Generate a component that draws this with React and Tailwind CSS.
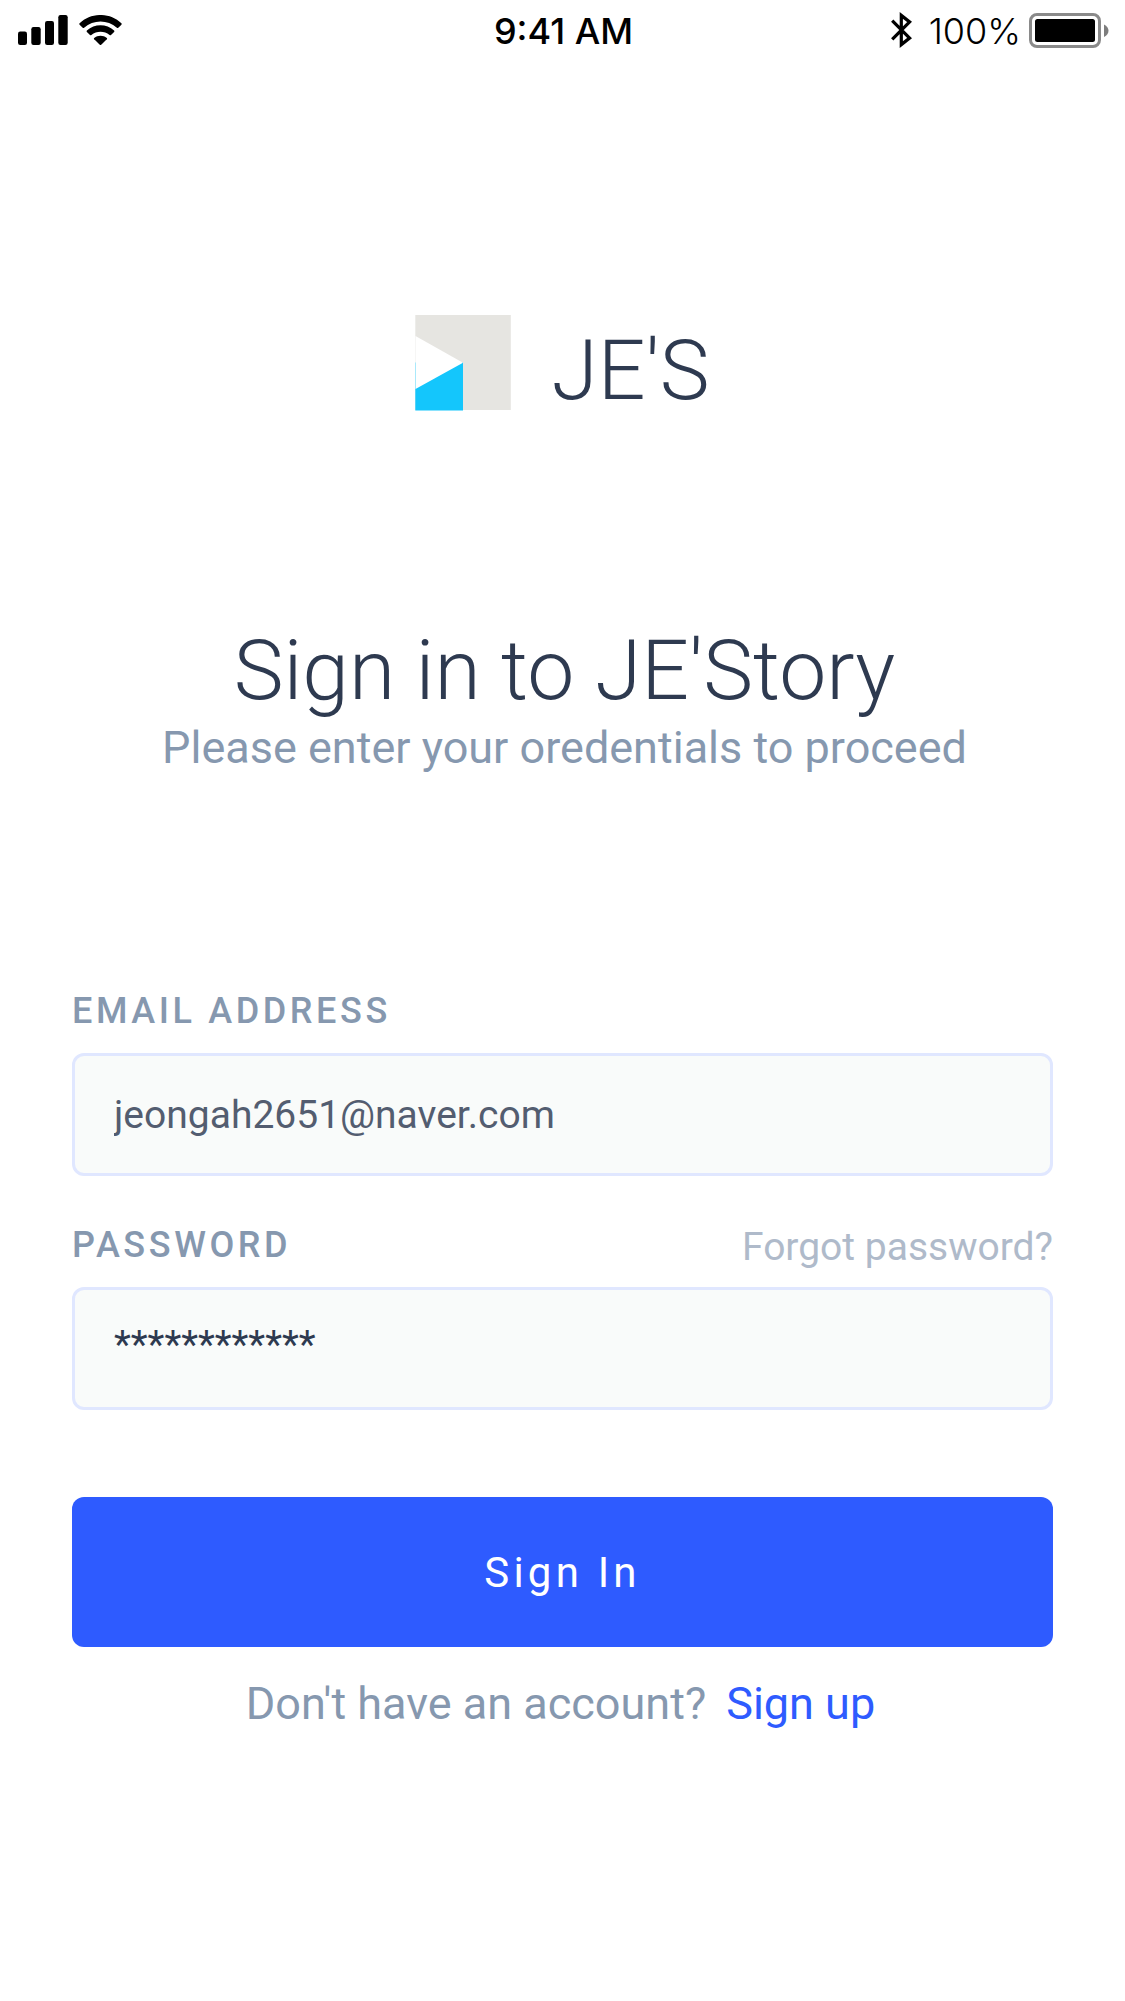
function SignalIcon() {
  return (
    <svg width="50" height="30" viewBox="0 0 50 30" aria-hidden="true">
      <rect x="0" y="16.5" width="9" height="13.5" rx="2.2" />
      <rect x="13.3" y="12" width="9.4" height="18" rx="2.2" />
      <rect x="27" y="6" width="9" height="24" rx="2.2" />
      <rect x="40.3" y="0" width="9.4" height="30" rx="2.2" />
    </svg>
  );
}

function WifiIcon() {
  return (
    <svg width="43" height="30" viewBox="0 0 43 30" aria-hidden="true">
      <path d="M0.6 8.3 C12 -2.8 31 -2.8 42.4 8.3 Q43 9 42.4 9.7 L39.3 12.7 Q38.6 13.3 37.9 12.7 C28.5 4.4 14.5 4.4 5.1 12.7 Q4.4 13.3 3.7 12.7 L0.6 9.7 Q0 9 0.6 8.3Z" />
      <path d="M7.9 15.6 C15.5 8.5 27.5 8.5 35.1 15.6 Q35.8 16.3 35.1 17 L32 20 Q31.3 20.6 30.6 20 C25.3 15.7 17.7 15.7 12.4 20 Q11.7 20.6 11 20 L7.9 17 Q7.2 16.3 7.9 15.6Z" />
      <path d="M15.2 22.9 C18.7 20 24.3 20 27.8 22.9 Q28.5 23.6 27.8 24.3 L22.2 29.7 Q21.5 30.3 20.8 29.7 L15.2 24.3 Q14.5 23.6 15.2 22.9Z" />
    </svg>
  );
}

function BluetoothIcon() {
  return (
    <svg width="22" height="36" viewBox="0 0 22 36" fill="none" stroke="#000" strokeWidth="3.2" aria-hidden="true">
      <path d="M1.2 8.6 L18.6 26 L10.3 32.6 V3.4 L18.6 10 L1.2 27.4" />
    </svg>
  );
}

function BatteryIcon() {
  return (
    <svg width="80" height="35" viewBox="0 0 80 35" aria-hidden="true">
      <rect x="1.5" y="1.5" width="69" height="32" rx="6.5" fill="none" stroke="#8a8a8a" strokeWidth="3" />
      <rect x="6" y="6" width="60" height="23" rx="2.5" />
      <path d="M75 11.5 C81 14 81 21.5 75 24Z" fill="#7d7d7d" />
    </svg>
  );
}

function LogoMark() {
  return (
    <svg width="96" height="96" viewBox="0 0 96 96" aria-hidden="true">
      <rect x="0.3" y="0" width="95.5" height="95" fill="#e6e5e1" />
      <rect x="0.3" y="47.5" width="47.7" height="48" fill="#14c6fc" />
      <path d="M0.5 21 L48 47.7 L0.5 74Z" fill="#fff" />
    </svg>
  );
}

function StatusBar() {
  return (
    <header className="grid h-[60px] grid-cols-[1fr_auto_1fr] items-center pr-4 pl-[18px] font-['Inter',sans-serif] text-black">
      <div className="flex gap-[11px]">
        <SignalIcon />
        <WifiIcon />
      </div>
      <time className="pt-0.5 text-[36px] leading-[58px] font-medium">9:41 AM</time>
      <div className="flex items-center justify-end">
        <BluetoothIcon />
        <span className="mr-2 ml-4 pt-0.5 text-[36px] leading-[58px] font-light">100%</span>
        <BatteryIcon />
      </div>
    </header>
  );
}

const labelClass = "text-[36px] leading-[42px] font-medium tracking-widest text-[#8698af]";
const inputClass =
  "block h-[123px] w-full rounded-xl border-[3px] border-[#e0e7ff] bg-[#f9fbfa] px-[39px] text-[39px] outline-none";

function Field({ id, label, action, ...input }) {
  return (
    <div>
      <div className="flex h-[63px] items-start justify-between">
        <label htmlFor={id} className={labelClass}>
          {label}
        </label>
        {action}
      </div>
      <input id={id} type="text" {...input} />
    </div>
  );
}

export default function App() {
  return (
    <div className="min-h-screen bg-white font-['Roboto',sans-serif] text-[#2e3a50]">
      <StatusBar />
      <main className="px-[72px] pt-[255px]">
        <div className="flex items-start justify-center gap-10">
          <LogoMark />
          <span className="text-[84px] leading-[112px] font-light">JE'S</span>
        </div>
        <div className="mt-[196px] pl-1 text-center">
          <h1 className="text-[84px] leading-[96px] font-light">Sign in to JE'Story</h1>
          <p className="text-[45px] leading-[58px] text-[#8698af]">Please enter your oredentials to proceed</p>
        </div>
        <form className="mt-[213px]" onSubmit={(e) => e.preventDefault()}>
          <div className="flex flex-col gap-12">
            <Field
              id="email"
              label="EMAIL ADDRESS"
              defaultValue="jeongah2651@naver.com"
              className={`${inputClass} text-[#535d70]`}
            />
            <Field
              id="password"
              label="PASSWORD"
              defaultValue="************"
              autoComplete="off"
              className={`${inputClass} pb-2 text-[#2e3a50]`}
              action={
                <a href="#forgot" className="text-[39px] leading-[46px] text-[#afbaca]">
                  Forgot password?
                </a>
              }
            />
          </div>
          <button
            type="submit"
            className="mt-[87px] block h-[150px] w-full rounded-xl bg-[#2e5bff] text-[42px] tracking-widest text-white"
          >
            Sign In
          </button>
        </form>
        <p className="mt-[29px] flex justify-center gap-5 pr-1 pb-12 text-[45px] leading-[56px] text-[#8698af]">
          <span>Don't have an account?</span>
          <a href="#signup" className="text-[#2e5bff]">
            Sign up
          </a>
        </p>
      </main>
    </div>
  );
}
